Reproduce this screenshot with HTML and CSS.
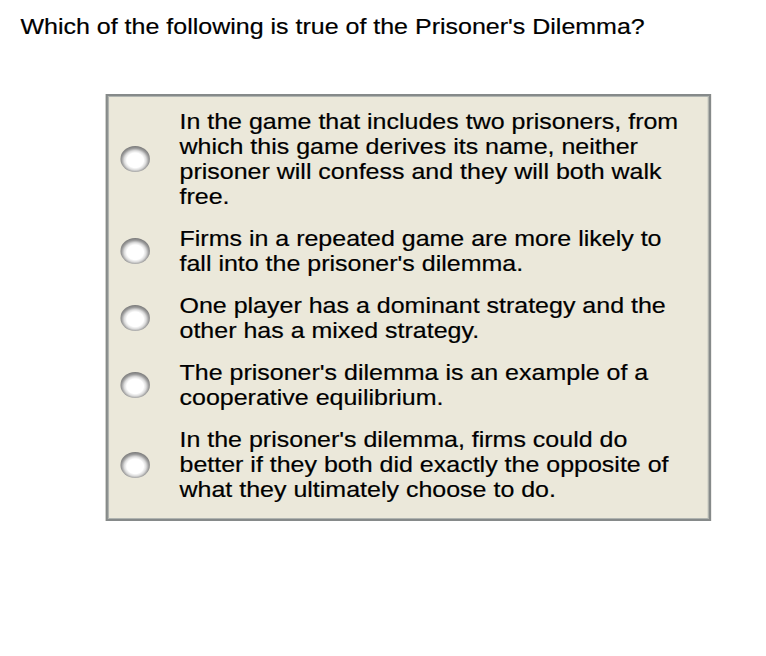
FILE: index.html
```html
<!DOCTYPE html>
<html>
<head>
<meta charset="utf-8">
<link rel="stylesheet" href="styles.css">
</head>
<body>
<div class="page">
  <div class="question">Which of the following is true of the Prisoner's Dilemma?</div>
  <div class="choices">
    <label class="choice"><span class="radio"></span><span class="text">In the game that includes two prisoners, from which this game derives its name, neither prisoner will confess and they will both walk free.</span></label>
    <label class="choice"><span class="radio"></span><span class="text">Firms in a repeated game are more likely to fall into the prisoner's dilemma.</span></label>
    <label class="choice"><span class="radio"></span><span class="text">One player has a dominant strategy and the other has a mixed strategy.</span></label>
    <label class="choice"><span class="radio"></span><span class="text">The prisoner's dilemma is an example of a cooperative equilibrium.</span></label>
    <label class="choice"><span class="radio"></span><span class="text">In the prisoner's dilemma, firms could do better if they both did exactly the opposite of what they ultimately choose to do.</span></label>
  </div>
</div>
</body>
</html>
```
FILE: styles.css
```css
html, body {
  margin: 0;
  padding: 0;
  background: #ffffff;
}
.page {
  width: 674px;
  padding: 14px 0 0 18px;
  transform: scaleX(1.136);
  transform-origin: 0 0;
  font-family: "Liberation Sans", Arial, sans-serif;
  font-size: 22px;
  line-height: 25px;
  color: #000;
  box-sizing: border-box;
  -webkit-text-stroke: 0.2px #000;
}
.question {
  margin: 0;
}
.choices {
  margin: 55px 0 0 75px;
  width: 533px;
  box-sizing: border-box;
  background: #ebe8da;
  border: 2px solid #868a8a;
  box-shadow: inset 0 0 0 1px #b0b4b0;
  padding: 13px 16px 17px 11px;
  display: flex;
  flex-direction: column;
  gap: 17px;
}
.choice {
  display: flex;
  align-items: center;
  gap: 26px;
}
.radio {
  flex: 0 0 26px;
  width: 26px;
  height: 26px;
  border-radius: 50%;
  background: radial-gradient(circle at 50% 55%, #ffffff 0%, #ffffff 38%, #dcdcdc 50%, #9a9a9a 62%, #6a6a6a 78%, #7c7c7c 100%);
}
.text {
  flex: 1;
}
```
